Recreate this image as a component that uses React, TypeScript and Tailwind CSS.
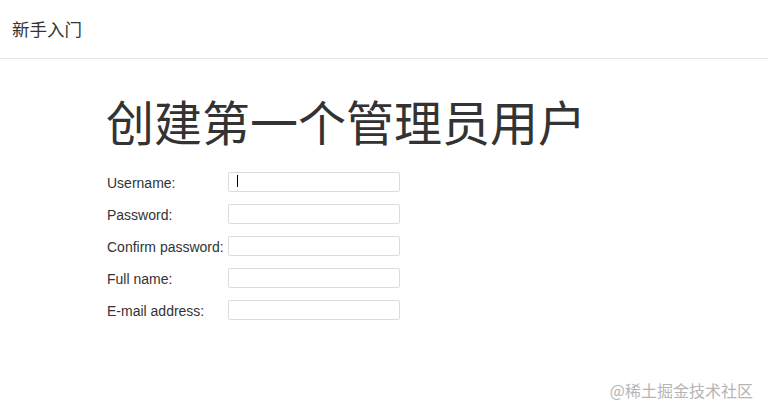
import React from "react";

const rows = [
  "Username:",
  "Password:",
  "Confirm password:",
  "Full name:",
  "E-mail address:",
];

export default function App() {
  return (
    <div className="relative w-[768px] h-[416px] bg-white overflow-hidden" style={{ fontFamily: '"Liberation Sans", Arial, "Noto Sans CJK SC", sans-serif' }}>
      <div className="h-[59px] border-b border-[#e5e5e5] flex items-center pl-[12px]">
        <span className="text-[17.5px] text-[#333]" style={{ fontFamily: '"Noto Sans CJK SC", sans-serif' }}>新手入门</span>
      </div>
      <div className="pl-[106px]">
        <h1 className="mt-[37px] text-[48px] leading-[48px] text-[#333] font-normal" style={{ fontFamily: '"Noto Sans CJK SC", serif' }}>
          创建第一个管理员用户
        </h1>
        <div className="mt-[28px] flex flex-col gap-[12px]">
          {rows.map((label, i) => (
            <div key={label} className="flex items-center h-[20px]">
              <label className="w-[122px] pl-[1px] text-[14px] text-[#333] leading-[20px] pt-[2px]">{label}</label>
              <div className="relative">
                <input type="text" className="w-[172px] h-[20px] border border-[#dcdcdc] rounded-[2px] bg-white outline-none" />
                {i === 0 && <div className="absolute left-[9px] top-[5px] w-[1px] h-[12px] bg-black" />}
              </div>
            </div>
          ))}
        </div>
      </div>
      <div className="absolute right-[15px] bottom-[16px] text-[16px] leading-[20px] text-[#b5b5b5]" style={{ fontFamily: '"Noto Sans CJK SC", sans-serif' }}>
        @稀土掘金技术社区
      </div>
    </div>
  );
}
